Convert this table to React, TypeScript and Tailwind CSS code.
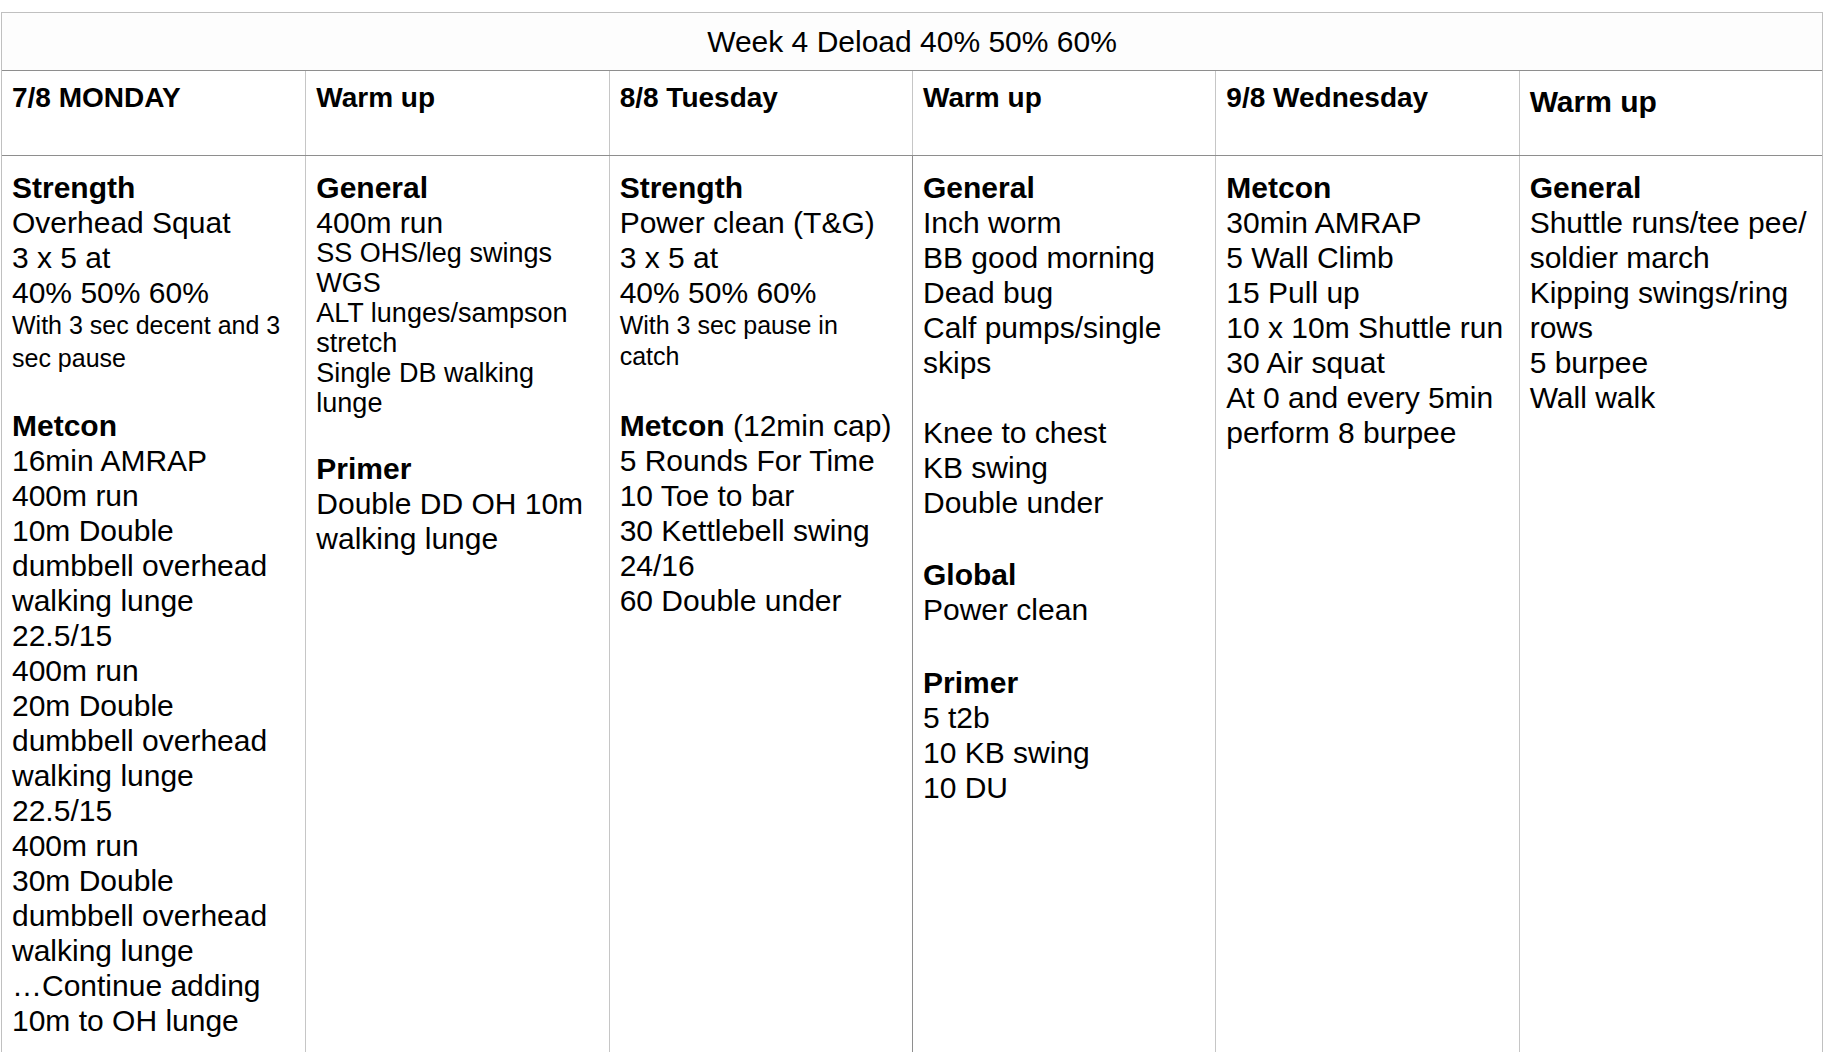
import type { ReactNode } from "react";

const FONT = { fontFamily: '"Liberation Sans", Arial, Helvetica, sans-serif' };

function H({ children }: { children: ReactNode }) {
  return <div className="whitespace-nowrap text-[30px] font-bold leading-[35px]">{children}</div>;
}

function L({ children }: { children: ReactNode }) {
  return <div className="whitespace-nowrap text-[30px] leading-[35px]">{children}</div>;
}

function Blank({ h }: { h?: string }) {
  return <div className={h ?? "h-[35px]"} />;
}

function HeadCell({ children, last, first }: { children: ReactNode; last?: boolean; first?: boolean }) {
  return (
    <div
      className={
        (first ? "" : "border-l border-[#c6c6c6] ") +
        (last ? "pt-[13px] text-[30px] leading-[35px] " : "pt-[10px] text-[28px] leading-[33px] ") +
        "pl-[10px] font-bold whitespace-nowrap"
      }
    >
      {children}
    </div>
  );
}

function Cell({ children, first, dark }: { children: ReactNode; first?: boolean; dark?: boolean }) {
  return (
    <div
      className={
        (first ? "" : dark ? "border-l border-[#8e8e8e] " : "border-l border-[#c6c6c6] ") +
        "pl-[10px] pr-[8px] pt-[14px] pb-[20px]"
      }
    >
      {children}
    </div>
  );
}

export default function App() {
  return (
    <div className="min-h-screen bg-white pl-[1px] pr-[3px] pt-[12px] text-black" style={FONT}>
      <div className="border-x border-t border-[#c0c0c0]">
        <div className="flex h-[58px] items-center justify-center border-b border-[#8e8e8e] bg-[#fdfdfd] text-[30px]">
          Week 4 Deload 40% 50% 60%
        </div>

        <div className="grid h-[85px] grid-cols-6 border-b border-[#8e8e8e]">
          <HeadCell first>7/8 MONDAY</HeadCell>
          <HeadCell>Warm up</HeadCell>
          <HeadCell>8/8 Tuesday</HeadCell>
          <HeadCell>Warm up</HeadCell>
          <HeadCell>9/8 Wednesday</HeadCell>
          <HeadCell last>Warm up</HeadCell>
        </div>

        <div className="grid grid-cols-6">
          <Cell first>
            <H>Strength</H>
            <L>Overhead Squat</L>
            <L>3 x 5 at</L>
            <L>40% 50% 60%</L>
            <div className="-mt-[1px] whitespace-nowrap text-[25px] leading-[33px]">
              <div>With 3 sec decent and 3</div>
              <div>sec pause</div>
            </div>
            <Blank h="h-[33px]" />
            <H>Metcon</H>
            <L>16min AMRAP</L>
            <L>400m run</L>
            <L>10m Double</L>
            <L>dumbbell overhead</L>
            <L>walking lunge</L>
            <L>22.5/15</L>
            <L>400m run</L>
            <L>20m Double</L>
            <L>dumbbell overhead</L>
            <L>walking lunge</L>
            <L>22.5/15</L>
            <L>400m run</L>
            <L>30m Double</L>
            <L>dumbbell overhead</L>
            <L>walking lunge</L>
            <L>…Continue adding</L>
            <L>10m to OH lunge</L>
          </Cell>

          <Cell>
            <H>General</H>
            <L>400m run</L>
            <div className="-mt-[2px] whitespace-nowrap text-[27px] leading-[30px]">
              <div>SS OHS/leg swings</div>
              <div>WGS</div>
              <div>ALT lunges/sampson</div>
              <div>stretch</div>
              <div>Single DB walking</div>
              <div>lunge</div>
            </div>
            <Blank h="h-[33px]" />
            <H>Primer</H>
            <L>Double DD OH 10m</L>
            <L>walking lunge</L>
          </Cell>

          <Cell>
            <H>Strength</H>
            <L>Power clean (T&amp;G)</L>
            <L>3 x 5 at</L>
            <L>40% 50% 60%</L>
            <div className="whitespace-nowrap text-[25px] leading-[31px]">
              <div>With 3 sec pause in</div>
              <div>catch</div>
            </div>
            <Blank h="h-[36px]" />
            <L>
              <span className="font-bold">Metcon</span> (12min cap)
            </L>
            <L>5 Rounds For Time</L>
            <L>10 Toe to bar</L>
            <L>30 Kettlebell swing</L>
            <L>24/16</L>
            <L>60 Double under</L>
          </Cell>

          <Cell dark>
            <H>General</H>
            <L>Inch worm</L>
            <L>BB good morning</L>
            <L>Dead bug</L>
            <L>Calf pumps/single</L>
            <L>skips</L>
            <Blank />
            <L>Knee to chest</L>
            <L>KB swing</L>
            <L>Double under</L>
            <Blank h="h-[37px]" />
            <H>Global</H>
            <L>Power clean</L>
            <Blank h="h-[38px]" />
            <H>Primer</H>
            <L>5 t2b</L>
            <L>10 KB swing</L>
            <L>10 DU</L>
          </Cell>

          <Cell>
            <H>Metcon</H>
            <L>30min AMRAP</L>
            <L>5 Wall Climb</L>
            <L>15 Pull up</L>
            <L>10 x 10m Shuttle run</L>
            <L>30 Air squat</L>
            <L>At 0 and every 5min</L>
            <L>perform 8 burpee</L>
          </Cell>

          <Cell>
            <H>General</H>
            <L>Shuttle runs/tee pee/</L>
            <L>soldier march</L>
            <L>Kipping swings/ring</L>
            <L>rows</L>
            <L>5 burpee</L>
            <L>Wall walk</L>
          </Cell>
        </div>
      </div>
    </div>
  );
}
